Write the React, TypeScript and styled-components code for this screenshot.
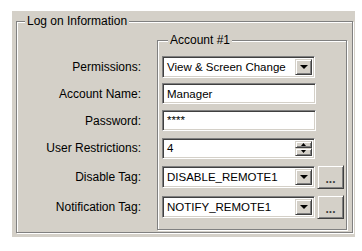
import * as React from 'react';
import styled, { createGlobalStyle } from 'styled-components';

const Global = createGlobalStyle`
    body {
        margin: 0;
        background: #fff;
        font-family: "Liberation Sans", Arial, sans-serif;
        font-size: 12px;
        color: #000;
    }
`;

const Panel = styled.div`
    display: flex;
    box-sizing: border-box;
    margin: 11px 0 0 12px;
    width: 343px;
    height: 226px;
    padding: 3px 2px 4px 4px;
    background: #d4d0c8;
`;

const Group = styled.fieldset<{ $pad: string }>`
    margin: 0;
    min-width: 0;
    padding: ${p => p.$pad};
    border: 1px solid #808080;
    box-shadow: inset 1px 1px 0 #fff, 1px 1px 0 #fff;
`;

const OuterGroup = styled(Group)`
    flex: 1;
`;

const InnerGroup = styled(Group)`
    width: 190px;
    box-sizing: border-box;
    margin-left: 13px;
`;

const Legend = styled.legend<{ $indent: number }>`
    margin-left: ${p => p.$indent}px;
    padding: 0 2px;
    line-height: 14px;
    background: #d4d0c8;
`;

const Body = styled.div`
    display: flex;
    align-items: flex-start;
    margin-top: 5px;
`;

const Labels = styled.div`
    display: flex;
    flex-direction: column;
    width: 127px;
    padding: 20px 3px 0 0;
    box-sizing: border-box;
`;

const Row = styled.div<{ $h: number }>`
    display: flex;
    align-items: center;
    height: ${p => p.$h}px;
`;

const LabelRow = styled(Row)`
    justify-content: flex-end;
`;

const Sunken = styled.div<{ $w: number; $h: number }>`
    display: flex;
    align-items: stretch;
    box-sizing: border-box;
    width: ${p => p.$w}px;
    height: ${p => p.$h}px;
    border: 1px solid;
    border-color: #808080 #fff #fff #808080;
    box-shadow: inset 1px 1px 0 #404040, inset -1px -1px 0 #d4d0c8;
    background: #fff;
    padding: 2px;
`;

const Value = styled.div<{ $top?: boolean }>`
    flex: 1;
    display: flex;
    align-items: ${p => (p.$top ? 'flex-start' : 'center')};
    padding-left: 2px;
    font-size: 11.5px;
    white-space: nowrap;
    overflow: hidden;
    line-height: 14px;
`;

const Raised = styled.div`
    display: flex;
    align-items: center;
    justify-content: center;
    box-sizing: border-box;
    background: #d4d0c8;
    border: 1px solid;
    border-color: #d4d0c8 #404040 #404040 #d4d0c8;
    box-shadow: inset 1px 1px 0 #fff, inset -1px -1px 0 #808080;
`;

const DropButton = styled(Raised)`
    width: 17px;
`;

const SpinBox = styled.div`
    display: flex;
    flex-direction: column;
    width: 17px;
`;

const SpinButton = styled(Raised)`
    flex: 1;
`;

const DotsButton = styled(Raised)`
    width: 27px;
    height: 24px;
    margin-left: 2px;
    padding-top: 3px;
    color: #404040;
    font-size: 12px;
    font-weight: bold;
    line-height: 12px;
`;

const Arrow = ({ up, small }: { up?: boolean; small?: boolean }) => {
    const w = small ? 5 : 8;
    const h = small ? 3 : 4;
    return (
        <svg width={w} height={h} viewBox={`0 0 ${w} ${h}`}>
            <path d={up ? `M${w / 2} 0 L${w} ${h} L0 ${h} Z` : `M0 0 L${w} 0 L${w / 2} ${h} Z`} fill="#000" />
        </svg>
    );
};

const Combo = ({ value }: { value: string }) => (
    <Sunken $w={153} $h={22}>
        <Value>{value}</Value>
        <DropButton>
            <Arrow />
        </DropButton>
    </Sunken>
);

const labels: Array<[string, number]> = [
    ['Permissions:', 27],
    ['Account Name:', 27],
    ['Password:', 27],
    ['User Restrictions:', 28],
    ['Disable Tag:', 30],
    ['Notification Tag:', 30],
];

const App = (): JSX.Element => {
    return (
        <>
            <Global />
            <Panel>
                <OuterGroup $pad="0 0 2px 0">
                    <Legend $indent={8}>Log on Information</Legend>
                    <Body>
                        <Labels>
                            {labels.map(([text, h]) => (
                                <LabelRow key={text} $h={h}>{text}</LabelRow>
                            ))}
                        </Labels>
                        <InnerGroup $pad="6px 0 7px 4px">
                            <Legend $indent={6}>Account #1</Legend>
                            <Row $h={27}>
                                <Combo value="View & Screen Change" />
                            </Row>
                            <Row $h={27}>
                                <Sunken $w={154} $h={21}>
                                    <Value>Manager</Value>
                                </Sunken>
                            </Row>
                            <Row $h={27}>
                                <Sunken $w={154} $h={21}>
                                    <Value $top>****</Value>
                                </Sunken>
                            </Row>
                            <Row $h={28}>
                                <Sunken $w={153} $h={21}>
                                    <Value>4</Value>
                                    <SpinBox>
                                        <SpinButton><Arrow up small /></SpinButton>
                                        <SpinButton><Arrow small /></SpinButton>
                                    </SpinBox>
                                </Sunken>
                            </Row>
                            <Row $h={30}>
                                <Combo value="DISABLE_REMOTE1" />
                                <DotsButton>...</DotsButton>
                            </Row>
                            <Row $h={30}>
                                <Combo value="NOTIFY_REMOTE1" />
                                <DotsButton>...</DotsButton>
                            </Row>
                        </InnerGroup>
                    </Body>
                </OuterGroup>
            </Panel>
        </>
    );
};

export default App;
